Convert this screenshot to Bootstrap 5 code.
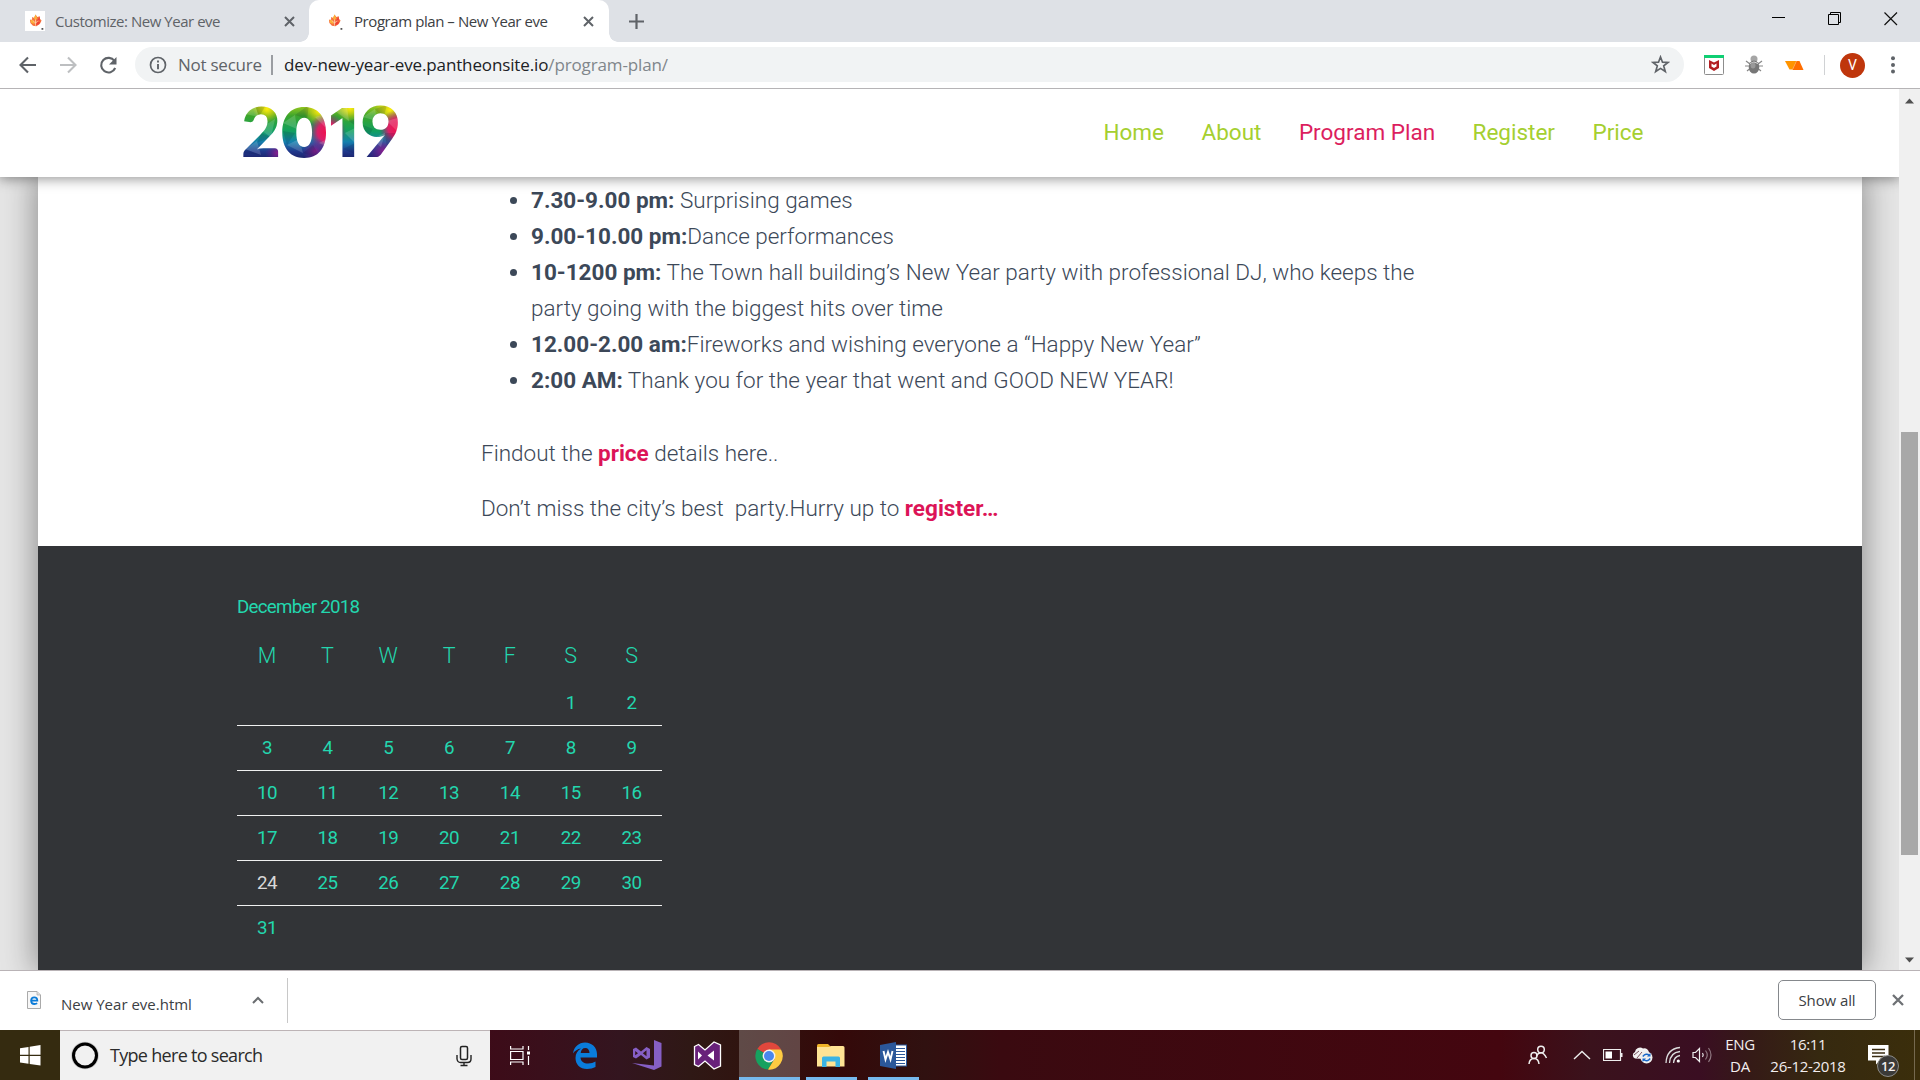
<!DOCTYPE html>
<html lang="en">
<head>
<meta charset="utf-8">
<meta name="viewport" content="width=device-width, initial-scale=1">
<title>Program plan – New Year eve</title>
<link href="https://cdn.jsdelivr.net/npm/bootstrap@5.3.0/dist/css/bootstrap.min.css" rel="stylesheet">
<style>
html,body{height:100%}
body{font-family:"Open Sans",sans-serif;overflow:hidden;background:#fff;color:#3c4043}
svg{display:block;flex:none}
.desktop{width:1920px;height:1080px}
/* tab strip */
.tabstrip{height:42px;background:#dee1e6}
.tab{font-size:15px;line-height:41px;white-space:nowrap}
.tab-idle{width:309px;padding-left:25px;color:#5f6368}
.tab-open{width:300px;padding-left:15px;background:#fff;border-radius:10px 10px 0 0;color:#3c4043;position:relative}
.tab-open::before,.tab-open::after{content:"";position:absolute;bottom:0;width:9px;height:9px}
.tab-open::before{left:-9px;background:radial-gradient(circle at 0 0,transparent 8.5px,#fff 9px)}
.tab-open::after{right:-9px;background:radial-gradient(circle at 100% 0,transparent 8.5px,#fff 9px)}
.tab-label{margin-left:10px}
.tab-idle .tab-label{letter-spacing:-.47px;width:229px}
.tab-open .tab-label{letter-spacing:-.43px;width:229px}
.wincontrols{gap:42.5px;padding-right:22px}
/* toolbar */
.toolbar{height:47px;border-bottom:1px solid #b6b4b6;padding-left:18px}
.tool-forward{margin-left:21px}
.tool-reload{margin-left:20px}
.tool-gap{margin-left:20px}
.omnibox{height:35px;width:1549px;border-radius:18px;background:#f1f3f4;margin-left:17px;margin-top:-1px;font-size:17px;line-height:35px;padding:0 14px 0 14px;white-space:nowrap}
.omni-note{color:#5f6368;letter-spacing:-.25px;margin-left:11px;width:93px}
.omni-bar{width:2px;height:20px;background:#9a9da1;margin-right:11px}
.omni-host{color:#202124;letter-spacing:-.13px}
.omni-path{color:#80868b}
.extensions{padding-left:20px}
.toolbar-line{width:1px;height:20px;background:#d0d2d4;margin-left:20px}
.avatar{width:25px;height:25px;border-radius:50%;background:#bf360c;color:#fff;font:400 14px/25px Roboto,sans-serif;text-align:center;margin-left:15px}
.kebab{margin-left:26px}
/* site */
.viewport{height:881px}
.site{font-family:Roboto,sans-serif;font-size:22.5px;background:#e5e5e5;overflow:hidden}
.site-header{height:88px;flex:none;background:#fff;box-shadow:0 1px 12px 1px rgba(0,0,0,.42);z-index:2;position:relative;padding-left:237px;padding-right:255.500px}
.site-nav{gap:37.5px}
.site-nav .nav-link{padding:0;color:#a5cf30;line-height:34px;margin-top:-3px}
.site-nav .nav-link.active{color:#dc1e5e}
.sheet{width:1824px;margin:0 auto 0 38px;background:#fff;box-shadow:0 0 30px 3px rgba(0,0,0,.38)}
.article{padding:5px 423px 20px 443px;line-height:36px;font-weight:300;color:#3c4858}
.article ul{padding-left:50px;margin-bottom:37px}
.article b{font-weight:700}
.article p{margin-bottom:19px}
.article p:last-child{margin-bottom:0}
.article a{color:#dc1457;font-weight:700;text-decoration:none}
.site-footer{background:#323437;padding:35px 0 0 199px;color:#23d7ae}
.cal{width:425px;table-layout:fixed;border-collapse:collapse;text-align:center;font-size:18.75px;line-height:24px}
.cal caption{caption-side:top;padding:0;height:51px;line-height:52px;color:inherit;letter-spacing:-.75px;font-weight:400;text-align:left}
.cal th{height:48px;font-size:21.500px;font-weight:300;padding:0}
.cal th:first-child{width:60px}
.cal td{height:45px;padding:1px 0 0;font-weight:400;letter-spacing:-.5px}
.cal tbody tr+tr{border-top:1px solid #f0f0f0}
.cal .now{color:#d8d8d8}
.scroller{width:21px;background:#f0f0f0;padding:9px 0 7px}
.thumb{width:17px;height:423px;background:#a8a8a8;margin-left:2px;margin-top:328px}
/* downloads */
.shelf{height:60px;border-top:1px solid #b9b3b6;border-bottom:1px solid #fff}
.shelf-item{width:288px;height:45px;border-right:1px solid #c8c8c8;padding-left:27px}
.shelf-name{font-size:15px;margin-left:20px;width:191px;margin-top:8px}
.shelf-close{margin:0 16px}
.show-all{width:98px;height:40px;border:1px solid #85888c;border-radius:5px;font-size:15px;font-weight:400;color:#3c4043;padding:0;letter-spacing:-.1px}
/* taskbar */
.taskbar{height:50px;background:linear-gradient(90deg,#352b10 0,#352b10 60px,#3d0b18 480px,#3a0f1b 540px,#33151f 620px,#2f1815 690px,#301410 740px,#340909 840px,#301110 925px,#3a0a10 1000px,#44060f 1500px,#3a121c 1590px,#3a0e22 1700px,#351a17 1750px,#362910 1820px,#3b2e0b 1920px);color:#fff}
.start{width:60px}
.search{width:430px;background:#f1f1f1;border-top:1px solid #bdb4b6;color:#2b2b2b;font-size:18px;letter-spacing:-.7px;padding-left:10px;padding-right:18px}
.search-text{margin-left:10px}
.apps{gap:1.200px}
.app{width:61px;height:50px}
.app-live{border-bottom:3px solid #76b9ed}
.app-front{background:rgba(255,255,255,.23)}
.app-narrow{width:51px}
.tray{font-size:15px;line-height:22px;color:#f3eeee;letter-spacing:-.3px;text-align:center}
.t-up{margin-left:25px}.t-bat{margin-left:12px}.t-cloud{margin-left:9px}.t-wifi{margin-left:12px}.t-vol{margin-left:10px}
.t-lang{margin-left:12px;width:30px}
.t-clock{margin-left:14px;width:78px}
.t-note{margin-left:21px;width:21px}
.t-edge{margin-left:25px;width:6px;height:50px;border-left:1px solid #75694f}
.note-count{right:-10px;bottom:-12px;width:22px;height:22px;border-radius:50%;background:#3b3a38;border:1px solid #8b8b88;font:600 13px/20px "Open Sans",sans-serif;text-align:center;letter-spacing:-.5px}
</style>
</head>
<body>
<svg width="0" height="0" class="position-absolute">
  <defs>
    <g id="leaf">
      <g transform="translate(2.800 1.800) scale(.86)"><path d="M9 2 11 5 14 4 14 7 16 9 14 13 10 15.500 6 15 3 12 2.500 8 5 8 5 5 7.500 6Z" fill="#f6713c"/>
      <path d="M9 2 11 6 9 9 7 6ZM3 8 7 9 8 13 4 12Z" fill="#fbb03b"/><path d="M14 5 14 9 10 10 12 7ZM15 10 12 14 9 14 11 11Z" fill="#ee3f36"/>
      <path d="M9 15 9 8M9 12 6 9M9 12 12 9" stroke="#ffe3c4" stroke-width=".8" fill="none"/></g>
      <rect x="16.500" y="17" width="1.800" height="1.800" fill="#555"/>
    </g>
    <g id="cross"><path d="M1 1 10 10M10 1 1 10" stroke="#5f6368" stroke-width="2" fill="none"/></g>
  </defs>
</svg>
<div class="desktop d-flex flex-column">

  <div class="tabstrip d-flex">
    <div class="tab tab-idle d-flex align-items-center">
      <svg width="20" height="20"><rect width="20" height="20" fill="#fff"/><use href="#leaf"/></svg>
      <span class="tab-label">Customize: New Year eve</span>
      <svg width="11" height="11"><use href="#cross"/></svg>
    </div>
    <div class="tab tab-open d-flex align-items-center">
      <svg width="20" height="20"><use href="#leaf"/></svg>
      <span class="tab-label">Program plan – New Year eve</span>
      <svg width="11" height="11"><use href="#cross"/></svg>
    </div>
    <div class="d-flex align-items-center ps-3 ms-1">
      <svg width="15" height="15"><path d="M7.500 0V15M0 7.500H15" stroke="#5f6368" stroke-width="2.200"/></svg>
    </div>
    <div class="wincontrols d-flex ms-auto pt-2">
      <svg class="mt-1" width="13" height="13"><path d="M0 5.500H13" stroke="#000"/></svg>
      <svg class="mt-1" width="14" height="14"><path d="M.5 2.500H10.500V12.500H.5ZM2.500 2.500V.5H12.500V10.500H10.500" fill="none" stroke="#000"/></svg>
      <svg class="mt-1" width="14" height="14"><path d="M.5.5 13 13M13 .5.5 13" stroke="#111" stroke-width="1.200"/></svg>
    </div>
  </div>

  <div class="toolbar d-flex align-items-center">
    <svg width="20" height="20" fill="none" stroke="#5f6368" stroke-width="2.100"><path d="M18 10H3M10 2.500 2.500 10 10 17.500"/></svg>
    <svg class="tool-forward" width="20" height="20" fill="none" stroke="#bdbfc1" stroke-width="2.100"><path d="M1 10H16M9 2.500 16.500 10 9 17.500"/></svg>
    <svg class="tool-reload" width="19" height="19" viewBox="0 0 19 19"><path d="M15.500 5A7.300 7.300 0 1 0 16.200 12" fill="none" stroke="#5f6368" stroke-width="2.100"/><path d="M17.500 1V8.500H10Z" fill="#5f6368"/></svg>
    <div class="omnibox d-flex align-items-center">
      <svg width="18" height="18"><circle cx="9" cy="9" r="7.500" fill="none" stroke="#5f6368" stroke-width="1.700"/><path d="M9 4.600V6.400M9 8V13.300" stroke="#5f6368" stroke-width="1.900"/></svg>
      <span class="omni-note">Not secure</span><span class="omni-bar"></span>
      <span class="omni-host">dev-new-year-eve.pantheonsite.io<span class="omni-path">/program-plan/</span></span>
      <svg class="ms-auto" width="19" height="19" viewBox="0 0 19 19"><path d="M9.500 2 11.500 7.200 17 7.500 12.700 10.900 14.300 16.500 9.500 13.400 4.700 16.500 6.300 10.900 2 7.500 7.500 7.200Z" fill="none" stroke="#5f6368" stroke-width="1.700"/></svg>
    </div>
    <div class="extensions d-flex align-items-center flex-grow-1">
      <svg width="20" height="20"><rect x=".5" y=".5" width="19" height="19" rx="1" fill="#fff" stroke="#8d8d8d"/><rect width="20" height="3" fill="#0fcf73"/><path d="M5 5 10 7.500 15 5V13L10 16 5 13Z" fill="#b31e22"/><path d="M7.500 8.500 10 10 12.500 8.500V11.500L10 13 7.500 11.500Z" fill="#fff"/></svg>
      <svg class="tool-gap" width="20" height="20"><path d="M2 6 6 9M1 11H6M3 16 6 13.500M18 6 14 9M19 11H14M17 16 14 13.500" stroke="#888" stroke-width="1.200" fill="none"/><circle cx="10" cy="4" r="3.500" fill="#a5a5a5"/><ellipse cx="10" cy="12" rx="5.300" ry="6.600" fill="#777"/><path d="M6 8.500Q10 5.500 14 8.500" stroke="#ddd" fill="none"/><ellipse cx="9" cy="10.500" rx="2.500" ry="3" fill="#999"/></svg>
      <svg class="tool-gap" width="20" height="20"><path d="M1 6H12.500L8.500 14.500H5.500Z" fill="#ff9400"/><path d="M12.500 6H15.500L19.500 15H8.500Z" fill="#ff6d00"/><path d="M12.500 6 8.500 14.500" stroke="#ffa550" stroke-width=".6"/></svg>
      <span class="toolbar-line"></span>
      <span class="avatar">V</span>
      <svg class="kebab" width="4" height="18" fill="#5f6368"><circle cx="2" cy="2.300" r="2"/><circle cx="2" cy="9" r="2"/><circle cx="2" cy="15.500" r="2"/></svg>
    </div>
  </div>

  <div class="viewport d-flex">
    <div class="site d-flex flex-column flex-grow-1">
      <header class="site-header d-flex align-items-center justify-content-between">
        <svg width="170" height="88" viewBox="0 0 170 88" role="img">
          <defs>
            <linearGradient id="rainbow" x1="0" y1="0" x2="0" y2="1"><stop offset=".08" stop-color="#9cc81e"/><stop offset=".25" stop-color="#3ba52c"/><stop offset=".5" stop-color="#12a05f"/><stop offset=".68" stop-color="#1480ad"/><stop offset=".84" stop-color="#20388c"/><stop offset="1" stop-color="#1a1a5e"/></linearGradient>
            <radialGradient id="pinkish"><stop offset="0" stop-color="#f2104c"/><stop offset=".5" stop-color="#ee1366" stop-opacity=".9"/><stop offset="1" stop-color="#7b1790" stop-opacity="0"/></radialGradient>
            <radialGradient id="sunny"><stop offset="0" stop-color="#fdee0c"/><stop offset="1" stop-color="#f5d10b" stop-opacity="0"/></radialGradient>
            <radialGradient id="plum"><stop offset="0" stop-color="#86208e"/><stop offset="1" stop-color="#5a1c88" stop-opacity="0"/></radialGradient>
            <pattern id="mosaic" y="4" width="170" height="88" patternUnits="userSpaceOnUse">
              <rect y="8" width="170" height="60" fill="url(#rainbow)"/>
              <circle cx="30" cy="16" r="14" fill="url(#sunny)"/><circle cx="82" cy="18" r="15" fill="url(#sunny)"/><circle cx="113" cy="15" r="14" fill="url(#sunny)"/><circle cx="153" cy="17" r="16" fill="url(#sunny)"/>
              <circle cx="90" cy="39" r="19" fill="url(#pinkish)"/><circle cx="160" cy="35" r="18" fill="url(#pinkish)"/>
              <circle cx="40" cy="60" r="12" fill="url(#plum)"/><circle cx="78" cy="58" r="13" fill="url(#plum)"/><circle cx="146" cy="58" r="16" fill="url(#plum)"/>
              <g fill="#fff" fill-opacity=".16"><path d="M4 20 18 12 22 24ZM22 36 38 26 34 44ZM8 56 20 48 24 62ZM46 30 58 22 60 36ZM50 52 62 46 66 60ZM78 24 92 20 88 34ZM82 50 94 44 96 56ZM98 18 110 14 112 28ZM108 40 120 34 118 50ZM126 24 138 16 140 28ZM134 46 148 40 144 54ZM150 28 164 24 160 38Z"/></g>
              <g fill="#002" fill-opacity=".13"><path d="M18 12 30 10 22 24ZM24 40 34 44 20 50ZM6 60 8 56 24 62ZM58 22 72 12 70 26ZM46 38 58 40 50 52ZM66 60 76 52 84 66ZM88 34 98 32 94 44ZM112 28 122 24 120 34ZM106 56 118 50 120 62ZM138 16 150 12 146 26ZM126 32 136 36 130 46ZM148 40 162 40 150 56Z"/></g>
            </pattern>
          </defs>
          <text y="68" fill="url(#mosaic)" font-weight="900" font-family="Lato, sans-serif" font-size="69"><tspan x="4">2</tspan><tspan x="43" font-family="Inter, sans-serif" font-size="68">0</tspan><tspan x="91" font-family="Inter, sans-serif" font-weight="800" font-size="68">1</tspan><tspan x="123" font-size="71">9</tspan></text>
        </svg>
        <nav class="site-nav nav flex-nowrap">
          <a class="nav-link" href="#">Home</a>
          <a class="nav-link" href="#">About</a>
          <a class="nav-link active" href="#">Program Plan</a>
          <a class="nav-link" href="#">Register</a>
          <a class="nav-link" href="#">Price</a>
        </nav>
      </header>
      <main class="sheet d-flex flex-column flex-grow-1">
        <div class="article">
          <ul>
            <li><b>7.30-9.00 pm:</b> Surprising games</li>
            <li><b>9.00-10.00 pm:</b>Dance performances</li>
            <li><b>10-1200 pm:</b> The Town hall building’s New Year party with professional DJ, who keeps the party going with the biggest hits over time</li>
            <li><b>12.00-2.00 am:</b>Fireworks and wishing everyone a “Happy New Year”</li>
            <li><b>2:00 AM:</b> Thank you for the year that went and GOOD NEW YEAR!</li>
          </ul>
          <p>Findout the <a href="#">price</a> details here..</p>
          <p>Don’t miss the city’s best&nbsp; party.Hurry up to <a href="#">register…</a></p>
        </div>
        <footer class="site-footer flex-grow-1">
          <table class="cal">
            <caption>December 2018</caption>
            <thead><tr><th>M</th><th>T</th><th>W</th><th>T</th><th>F</th><th>S</th><th>S</th></tr></thead>
            <tbody>
              <tr><td></td><td></td><td></td><td></td><td></td><td>1</td><td>2</td></tr>
              <tr><td>3</td><td>4</td><td>5</td><td>6</td><td>7</td><td>8</td><td>9</td></tr>
              <tr><td>10</td><td>11</td><td>12</td><td>13</td><td>14</td><td>15</td><td>16</td></tr>
              <tr><td>17</td><td>18</td><td>19</td><td>20</td><td>21</td><td>22</td><td>23</td></tr>
              <tr><td class="now">24</td><td>25</td><td>26</td><td>27</td><td>28</td><td>29</td><td>30</td></tr>
              <tr><td>31</td><td></td><td></td><td></td><td></td><td></td><td></td></tr>
            </tbody>
          </table>
        </footer>
      </main>
    </div>
    <div class="scroller d-flex flex-column">
      <svg width="20" height="6"><path d="M6 5.500 10.500 .5 15 5.500Z" fill="#505050"/></svg>
      <div class="thumb"></div>
      <svg class="mt-auto" width="20" height="6"><path d="M6 .5 10.500 5.500 15 .5Z" fill="#505050"/></svg>
    </div>
  </div>

  <div class="shelf d-flex align-items-center">
    <div class="shelf-item d-flex align-items-center">
      <svg width="14" height="18"><path d="M.5.5H10L13.500 4V17.500H.5Z" fill="#f7f7f7" stroke="#aaa"/><path d="M10 .5V4H13.500" fill="#ddd" stroke="#aaa" stroke-width=".7"/><path d="M3.600 9.600H10.300Q10.300 6.300 7.200 6.300Q4.300 6.300 4.100 9.600Q4.200 13 7.500 13Q9 13 10.200 12.300" fill="none" stroke="#0a7bd8" stroke-width="1.800"/></svg>
      <span class="shelf-name">New Year eve.html</span>
      <svg width="12" height="8"><path d="M1 7 6 2 11 7" fill="none" stroke="#6a6d70" stroke-width="2"/></svg>
    </div>
    <button class="btn show-all ms-auto">Show all</button>
    <svg class="shelf-close" width="12" height="12"><path d="M1 1 11 11M11 1 1 11" stroke="#6e7175" stroke-width="2.300"/></svg>
  </div>

  <div class="taskbar d-flex">
    <div class="start d-flex align-items-center justify-content-center">
      <svg width="21" height="21"><path d="M0 3.200 8.500 2V9.700H0ZM9.700 1.700 20.500 0V9.700H9.700ZM0 10.900H8.500V18.800L0 17.500ZM9.700 10.900H20.500V20.500L9.700 19Z" fill="#fff"/></svg>
    </div>
    <div class="search d-flex align-items-center">
      <svg width="30" height="30"><circle cx="15" cy="14.500" r="11.800" fill="none" stroke="#777" stroke-width="4" stroke-opacity=".35"/><circle cx="15" cy="14.500" r="11.500" fill="none" stroke="#000" stroke-width="3"/></svg>
      <span class="search-text">Type here to search</span>
      <svg class="ms-auto" width="16" height="22"><rect x="4.500" y="1.500" width="7" height="13" rx="1.500" fill="none" stroke="#222" stroke-width="1.500"/><path d="M1 10V14Q1.500 17.500 4.500 17.500H11.500Q15 17.500 15 14V10M8 17.500V20.500M4.500 20.500H11.500" fill="none" stroke="#222" stroke-width="1.400"/></svg>
    </div>
    <div class="apps d-flex">
      <div class="app d-flex align-items-center justify-content-center">
        <svg width="21" height="21" fill="none" stroke="#fff" stroke-width="1.200"><path d="M.6 1V4H13V1M.6 20V17H13V20M.6 6.500H13V14.500H.6ZM18.500 1V5M18.500 11V20"/><rect x="17" y="6.500" width="3" height="3" fill="#fff" stroke="none"/></svg>
      </div>
      <div class="app d-flex align-items-center justify-content-center">
        <svg class="ms-1" width="26" height="27" viewBox="0 0 26 27"><path d="M1 11.500C2 4.500 7 .5 13 .5C20 .5 25 5.500 25 12V15.500H8.500C8.800 19.500 12 21.500 16 21.500C19 21.500 21.500 20.700 23.500 19.500V25C21 26.300 18.500 27 15 27C8 27 3.500 22.500 3.500 16C3.500 12 5.500 8.500 9 6.500C5.500 7 3 8.700 1 11.500ZM8.700 11H17.500C17.500 8 16 6 13.300 6C10.500 6 9 8 8.700 11Z" fill="#0a7cdb"/></svg>
      </div>
      <div class="app d-flex align-items-center justify-content-center">
        <svg class="ms-1" width="30" height="30"><path d="M22 0 29.500 3V26.500L22 30 0 23 22 25.500Z" fill="#865fc5"/><path fill-rule="evenodd" d="M1 9 4 7.500 9 11.500 14.500 7 18 9V17.500L14.500 19.500 9 15 4 18.500 1 17ZM3.200 11V15.300L6 13.200ZM10.800 13.200 14.500 10.300V16.200Z" fill="#865fc5"/></svg>
      </div>
      <div class="app d-flex align-items-center justify-content-center">
        <svg width="29" height="29" viewBox="0 0 29 29"><path d="M1.500 5.500 5.500 3.500 12 9 21 1 27.500 4V25L21 28 12 20 5.500 25.500 1.500 23.500Z" fill="#68217a" stroke="#fff" stroke-width="1.300"/><path d="M5 10.500V18.500L9 14.500ZM14.500 14.500 21 9.500V19.500Z" fill="#fff"/></svg>
      </div>
      <div class="app app-live app-front d-flex align-items-center justify-content-center">
        <svg class="mt-1" width="28" height="28" viewBox="0 0 28 28"><path d="M14 14 2.300 7A13.600 13.600 0 0 1 25.800 7Z" fill="#e0473c"/><path d="M14 14 2.300 7A13.600 13.600 0 0 0 13 27.600L19 17Z" fill="#16a15f"/><path d="M14 14 14 7.500H26A13.600 13.600 0 0 1 13 27.600L19.500 17Z" fill="#fecb42"/><circle cx="14" cy="14" r="6.400" fill="#f2f2f2"/><circle cx="14" cy="14" r="5" fill="#4a87ee"/></svg>
      </div>
      <div class="app d-flex justify-content-center">
        <div class="app-live app-narrow d-flex align-items-center justify-content-center">
          <svg class="mt-1" width="28" height="24"><path d="M0 1.500Q0 0 1.500 0H11L14 3H0Z" fill="#f0b429"/><path d="M0 3H12L14 2H26Q27.500 2 27.500 3.500V22.500H0Z" fill="#ffe394"/><path d="M5 23V14Q5 12.500 6.500 12.500H21.500Q23 12.500 23 14V23H18.500V17.500H9.500V23Z" fill="#3bb3e4"/></svg>
        </div>
      </div>
      <div class="app d-flex justify-content-center">
        <div class="app-live app-narrow d-flex align-items-center justify-content-center">
          <svg class="mt-1" width="28" height="27"><rect x="14" y="3" width="12.500" height="21" fill="#fff" stroke="#2b579a"/><path d="M16 6.500H25M16 9.500H25M16 12.500H25M16 15.500H25M16 18.500H25M16 21.500H25" stroke="#2b579a" stroke-width="1.200"/><path d="M0 3 16 0V27L0 24Z" fill="#2b579a"/><path d="M3.500 9 5.500 17.500 8 10 10.500 17.500 12.500 9" fill="none" stroke="#fff" stroke-width="1.900"/></svg>
        </div>
      </div>
    </div>
    <div class="tray d-flex align-items-center ms-auto">
      <svg width="20" height="20" fill="none" stroke="#eee" stroke-width="1.500"><circle cx="13" cy="4.500" r="3.300"/><path d="M8.500 11Q10 7.800 13 7.800T18.500 13"/><circle cx="6" cy="10.500" r="3"/><path d="M1 19Q1.500 13.500 6 13.500T11 19"/></svg>
      <svg class="t-up" width="18" height="10"><path d="M1 9 9 1.500 17 9" fill="none" stroke="#eee" stroke-width="1.400"/></svg>
      <svg class="t-bat" width="20" height="12"><path d="M.5.5H17.500V11.500H.5Z" fill="none" stroke="#eee" stroke-width="1.200"/><rect x="2.500" y="2.500" width="6.500" height="7" fill="#fff"/><rect x="18" y="4" width="1.500" height="4" fill="#eee"/></svg>
      <svg class="t-cloud" width="21" height="18"><path d="M3 12.500A3.500 3.500 0 0 1 3 6 5 5 0 0 1 11 2.500 4.500 4.500 0 0 1 17 7L14 13Z" fill="#f2f2f2"/><path d="M2 9 7 5M5 12 10 6" stroke="#5a2a38" stroke-width=".8"/><circle cx="14.500" cy="11.500" r="6" fill="#eee"/><path d="M10.800 10.500Q14 6.500 17.500 9.500M18.200 12.500Q15 16.500 11.500 13.500" fill="none" stroke="#1766c8" stroke-width="1.500"/><path d="M18.500 7V10.500H15ZM10.500 16V12.500H14Z" fill="#1766c8"/></svg>
      <svg class="t-wifi" width="17" height="18" fill="none" stroke="#ddd" stroke-width="1.300"><path d="M1 17Q1.500 3 15 1.500M4.500 17Q5 6.500 15 5.500M8.500 17Q9 10.500 15 9.500"/><circle cx="13.300" cy="15" r="1.600" fill="#fff" stroke="none"/></svg>
      <svg class="t-vol" width="21" height="18" fill="none" stroke="#eee" stroke-width="1.200"><path d="M1 6.500H3.500L7.500 2.500V15.500L3.500 11.500H1Z"/><path d="M10.500 7Q12 9 10.500 11"/><path d="M13.500 4.500Q17 9 13.500 13.500M16.500 2Q21.500 9 16.500 16" stroke="#8f7780"/></svg>
      <div class="t-lang">ENG<br>DA</div>
      <div class="t-clock">16:11<br>26-12-2018</div>
      <div class="t-note position-relative">
        <svg width="21" height="20"><path d="M0 0H20.500V15.500H12L8 19.500V15.500H0Z" fill="#fff"/><path d="M4 4.500H17M4 8H17M4 11.500H17" stroke="#3a2c12" stroke-width="1.300"/></svg>
        <span class="note-count position-absolute">12</span>
      </div>
      <div class="t-edge"></div>
    </div>
  </div>
</div>
<script src="https://cdn.jsdelivr.net/npm/bootstrap@5.3.0/dist/js/bootstrap.bundle.min.js"></script>
</body>
</html>
